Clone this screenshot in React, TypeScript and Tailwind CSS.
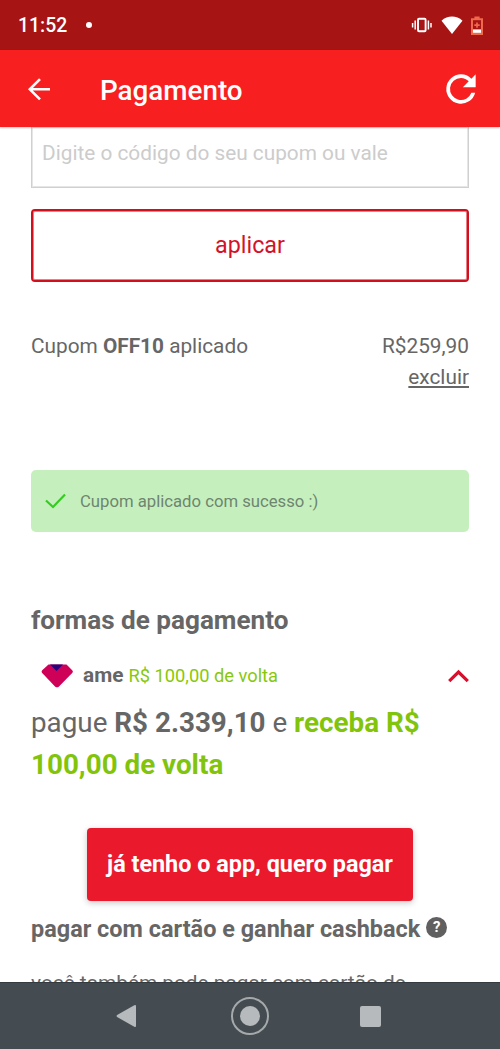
import React from "react";

function StatusBar() {
  return (
    <div className="flex h-[50px] shrink-0 items-center bg-[#a61414] text-white">
      <span className="ml-[18px] mt-[2px] text-[19.4px] leading-6 font-medium">11:52</span>
      <span className="ml-[19px] size-[6px] rounded-full bg-white" />
      <svg className="ml-auto" width="22" height="18" viewBox="0 0 22 18" fill="none" stroke="#fff" strokeWidth="1.5">
        <rect x="7" y="2.7" width="7.6" height="12.6" rx="1" strokeWidth="1.9" />
        <path d="M4.2 4.5v9M1.6 7v4.6M17.4 4.5v9M20 7v4.6" />
      </svg>
      <svg className="ml-[8px]" width="22" height="20" viewBox="0 0 22 20" fill="#fff">
        <path d="M0.5 5.8C6.5 0.2 15.5 0.2 21.5 5.8L11 19Z" />
      </svg>
      <svg className="ml-[8px] mr-[17px]" width="12" height="19" viewBox="0 0 12 19">
        <path d="M3.4 0.4h5.2v1.8H12V19H0V2.2h3.4z" fill="#f0694c" />
        <path d="M2 4.2h8v9H2z" fill="#a61414" />
        <path d="M2 13.6h8v3.2H2z" fill="#fff" />
        <path d="M6 6.4v5.4M3.3 9.1h5.4" stroke="#f0694c" strokeWidth="1.7" />
      </svg>
    </div>
  );
}

function AppBar() {
  return (
    <header className="z-10 flex h-[77px] shrink-0 items-center bg-[#f71f20] text-white shadow-[0_1px_2px_rgba(0,0,0,0.2)]">
      <svg className="ml-[27px]" width="24" height="24" viewBox="0 0 24 24" fill="none" stroke="#fff" strokeWidth="2.6">
        <path d="M23 12.3H3M13 2.2 2.8 12.3 13 22.4" />
      </svg>
      <h1 className="ml-[49px] mt-[4px] text-[27.8px] leading-8 font-medium">Pagamento</h1>
      <svg className="mt-[1px] ml-auto mr-[17px]" width="44" height="44" viewBox="0 0 24 24" fill="#fff">
        <path d="M17.65 6.35A7.96 7.96 0 0 0 12 4a8 8 0 1 0 7.73 10h-2.08A6 6 0 1 1 12 6c1.66 0 3.14.69 4.22 1.78L13 11h7V4z" />
      </svg>
    </header>
  );
}

function NavBar() {
  return (
    <nav className="flex h-[67px] shrink-0 items-center border-t border-[#343b40] bg-[#444c51]">
      <svg className="ml-[116px]" width="21" height="24" viewBox="0 0 21 24" fill="#b7babc">
        <path d="M18.3 1.3Q20 .4 20 2.2V21.8Q20 23.6 18.3 22.7L1.1 13Q0 12 1.1 11Z" />
      </svg>
      <div className="ml-[94px] flex size-[38px] items-center justify-center rounded-full border-2 border-[#a5a9ac]">
        <div className="size-5 rounded-full bg-[#b7babc]" />
      </div>
      <div className="ml-[91px] size-[21px] rounded-[2px] bg-[#b7babc]" />
    </nav>
  );
}

export default function App() {
  return (
    <div className="flex h-[1049px] w-[500px] flex-col overflow-hidden bg-white font-['Roboto',sans-serif] text-[#666]">
      <StatusBar />
      <AppBar />
      <main className="flex h-[855px] shrink-0 flex-col overflow-hidden px-[31px] whitespace-nowrap">
        <div className="h-[61px] shrink-0 border border-t-0 border-[#d0d0d0] pl-[10px] text-[20.8px] leading-[52px] text-[#ccc] shadow-[inset_0_0_0_1px_#e6e6e6]">
          Digite o código do seu cupom ou vale
        </div>
        <button className="mt-[21px] h-[73px] shrink-0 rounded-[4px] border-2 border-[#d0101c] pb-px text-[23.3px] text-[#d3122b] shadow-[inset_0_0_0_1px_#e88088]">
          aplicar
        </button>
        <div className="mt-[48px] flex h-8 shrink-0 justify-between text-[20.8px] leading-8">
          <span>
            Cupom <b className="font-bold">OFF10</b> aplicado
          </span>
          <span>R$259,90</span>
        </div>
        <a className="-mt-px h-8 shrink-0 self-end text-[20.8px] leading-8 underline decoration-2 underline-offset-2">excluir</a>
        <div className="mt-[77px] flex h-[62px] shrink-0 items-center rounded-[5px] bg-[#c5f0be] text-[16.7px] text-[#6f8570]">
          <svg className="ml-[14px]" width="21" height="16" viewBox="0 0 21 16" fill="none" stroke="#35cc22" strokeWidth="2.2">
            <path d="M1 7.5 8 14 20 1.5" />
          </svg>
          <span className="mt-px ml-[14px]">Cupom aplicado com sucesso :)</span>
        </div>
        <h2 className="mt-[72px] h-8 shrink-0 text-[26.1px] leading-8 font-bold">formas de pagamento</h2>
        <div className="mt-[24px] flex h-[30px] shrink-0 items-center">
          <svg className="mt-px ml-[10px]" width="33" height="24" viewBox="0 0 33 24">
            <path d="M7.5 0.5H25.5L31.2 6.2Q32.5 7.5 31.2 8.9L18 22.5Q16 24.2 14 22.5L1.2 8.9Q0 7.5 1.2 6.2Z" fill="#ce0058" />
            <path d="M9 .5h13L15.5 7Z" fill="#28047c" />
          </svg>
          <span className="mt-[2px] ml-[9px] text-[20.8px] font-bold">ame</span>
          <span className="mt-[2px] ml-[5px] text-[18.3px] text-[#86c80d]">R$ 100,00 de volta</span>
          <svg className="mt-[2px] ml-auto" width="21" height="14" viewBox="0 0 21 14" fill="none" stroke="#d9102d" strokeWidth="3.2">
            <path d="M1.2 12.2 10.5 3l9.3 9.2" />
          </svg>
        </div>
        <p className="mt-[12px] shrink-0 text-[27.8px] leading-[41.5px]">
          pague <b className="font-bold">R$ 2.339,10</b> e{" "}
          <b className="font-bold text-[#82c40c]">
            receba R$
            <br />
            100,00 de volta
          </b>
        </p>
        <button className="mt-[43px] h-[73px] w-[326px] shrink-0 self-center rounded-[4px] bg-[#ea1a2c] text-[23.4px] font-bold text-white shadow-[0_2px_6px_rgba(0,0,0,0.22)]">
          já tenho o app, quero pagar
        </button>
        <div className="mt-[12px] flex h-8 shrink-0 items-center">
          <h3 className="text-[23.46px] leading-8 font-bold">pagar com cartão e ganhar cashback</h3>
          <span className="mb-[4px] ml-[6px] flex size-[21px] items-center justify-center rounded-full bg-[#606060] text-[15px] leading-none font-bold text-white">
            ?
          </span>
        </div>
        <p className="mt-[22px] shrink-0 text-[20.8px] leading-8">você também pode pagar com cartão de</p>
      </main>
      <NavBar />
    </div>
  );
}
